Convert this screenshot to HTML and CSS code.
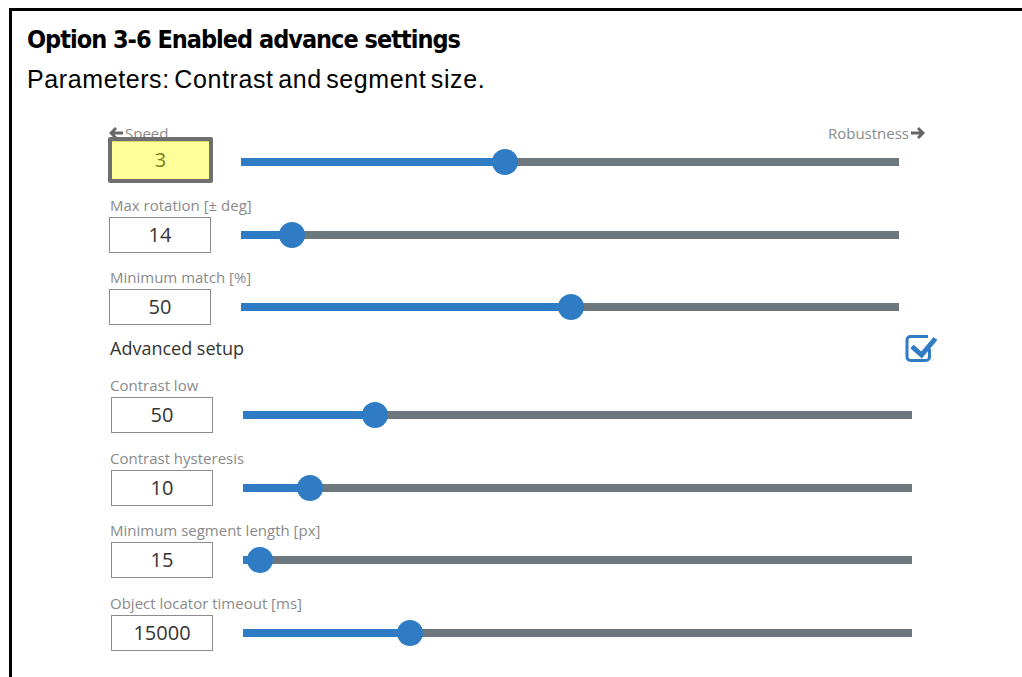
FILE: index.html
```html
<!DOCTYPE html>
<html lang="en">
<head>
  <meta charset="UTF-8">
  <title>Option 3-6 Enabled advance settings</title>
  <link rel="stylesheet" href="styles.css">
</head>
<body>
<div class="frame">
  <!-- heading -->
  <h1 class="title">Option 3-6 Enabled advance settings</h1>
  <p class="subtitle">Parameters: Contrast and segment size.</p>

  <div class="panel">
    <!-- speed / robustness -->
    <div class="speed-head">
      <span class="hint">
        <svg class="arrow" viewBox="0 0 14 12"><path d="M6 0 L0 6 L6 12 L8 10 L5.5 7.5 H14 V4.5 H5.5 L8 2 Z"/></svg>Speed
      </span>
      <span class="hint">
        Robustness<svg class="arrow" viewBox="0 0 14 12"><path d="M8 0 L14 6 L8 12 L6 10 L8.5 7.5 H0 V4.5 H8.5 L6 2 Z"/></svg>
      </span>
    </div>
    <div class="row row-speed">
      <div class="value value-active">3</div>
      <div class="slider slider-low">
        <div class="fill" style="width: 40.1%"></div>
        <div class="thumb" style="left: 40.1%"></div>
      </div>
    </div>

    <div class="field">
      <div class="label">Max rotation [± deg]</div>
      <div class="row">
        <div class="value">14</div>
        <div class="slider">
          <div class="fill" style="width: 7.7%"></div>
          <div class="thumb" style="left: 7.7%"></div>
        </div>
      </div>
    </div>

    <div class="field field-last">
      <div class="label">Minimum match [%]</div>
      <div class="row">
        <div class="value">50</div>
        <div class="slider">
          <div class="fill" style="width: 50.2%"></div>
          <div class="thumb" style="left: 50.2%"></div>
        </div>
      </div>
    </div>

    <!-- advanced -->
    <div class="adv-head">
      <span>Advanced setup</span>
      <svg class="check" viewBox="0 0 32 28">
        <path d="M23 2.5 H5.5 a3.5 3.5 0 0 0 -3.5 3.5 V23 a3.5 3.5 0 0 0 3.5 3.5 H21 a3.5 3.5 0 0 0 3.5 -3.5 V15" fill="none" stroke="#2f7cc4" stroke-width="3"/>
        <path d="M7 12.5 L16.5 21 L30.5 4.5" fill="none" stroke="#2f7cc4" stroke-width="5" stroke-linejoin="miter"/>
      </svg>
    </div>

    <div class="adv">
      <div class="field">
        <div class="label">Contrast low</div>
        <div class="row">
          <div class="value">50</div>
          <div class="slider">
            <div class="fill" style="width: 19.7%"></div>
            <div class="thumb" style="left: 19.7%"></div>
          </div>
        </div>
      </div>
      <div class="field">
        <div class="label">Contrast hysteresis</div>
        <div class="row">
          <div class="value">10</div>
          <div class="slider">
            <div class="fill" style="width: 10%"></div>
            <div class="thumb" style="left: 10%"></div>
          </div>
        </div>
      </div>
      <div class="field">
        <div class="label">Minimum segment length [px]</div>
        <div class="row">
          <div class="value">15</div>
          <div class="slider">
            <div class="fill" style="width: 2.5%"></div>
            <div class="thumb" style="left: 2.5%"></div>
          </div>
        </div>
      </div>
      <div class="field">
        <div class="label">Object locator timeout [ms]</div>
        <div class="row">
          <div class="value">15000</div>
          <div class="slider">
            <div class="fill" style="width: 25%"></div>
            <div class="thumb" style="left: 25%"></div>
          </div>
        </div>
      </div>
    </div>
  </div>
</div>
</body>
</html>
```

FILE: styles.css
```css
html, body {
  margin: 0;
  padding: 0;
  background-color: #fff;
  overflow: hidden;
}
.frame {
  width: 1100px;
  height: 700px;
  margin: 8px 0 0 9px;
  border-top: 3px solid #000;
  border-left: 3px solid #000;
  box-sizing: border-box;
}
.title {
  margin: 0;
  padding: 14px 0 0 15px;
  font-family: "DejaVu Sans Condensed", "DejaVu Sans", sans-serif;
  font-size: 25px;
  line-height: 30px;
  letter-spacing: -1px;
  font-weight: bold;
  color: #000;
}
.subtitle {
  margin: 9px 0 0 15px;
  font-family: "Liberation Sans", sans-serif;
  font-size: 25px;
  line-height: 30px;
  letter-spacing: 0.6px;
  word-spacing: -3px;
  color: #000;
}
.panel {
  margin: 30px 0 0 96px;
  font-family: "Open Sans", sans-serif;
}
.speed-head {
  width: 817px;
  display: flex;
  justify-content: space-between;
  margin-bottom: -5px;
}
.hint, .label {
  font-size: 15px;
  line-height: 18px;
  color: #8a8a8a;
}
.hint {
  display: flex;
  align-items: center;
  gap: 2px;
  padding-left: 1px;
}
.arrow {
  width: 14px;
  height: 12px;
  fill: #666;
}
.row {
  width: 791px;
  display: grid;
  grid-template-columns: 133px 1fr;
  align-items: center;
}
.row-speed {
  margin-bottom: 13px;
}
.field {
  margin-bottom: 15px;
}
.field-last {
  margin-bottom: 12px;
}
.label {
  margin-bottom: 3px;
  padding-left: 2px;
}
.adv .label {
  padding-left: 0;
}
.value {
  width: 102px;
  height: 36px;
  margin-left: 1px;
  box-sizing: border-box;
  border: 1px solid #8c8c8c;
  font-size: 20px;
  line-height: 34px;
  text-align: center;
  color: #333;
}
.value-active {
  width: 105px;
  height: 46px;
  margin-left: 0;
  border: 4px solid #6f6f6f;
  border-radius: 2px;
  background-color: #ffff99;
  box-shadow: inset 0 1px 0 #d8d870;
  line-height: 38px;
  color: #7d7a22;
}
.slider {
  position: relative;
  height: 8px;
  background-color: #6c777e;
}
.slider-low {
  margin-top: 4px;
}
.fill {
  height: 100%;
  background-color: #2f7cc4;
}
.thumb {
  position: absolute;
  top: 50%;
  width: 26px;
  height: 26px;
  margin: -13px 0 0 -13px;
  border-radius: 50%;
  background-color: #2f7cc4;
}
.adv-head {
  width: 829px;
  height: 22px;
  display: flex;
  justify-content: space-between;
  align-items: center;
  margin-bottom: 17px;
  font-size: 18px;
  color: #333;
}
.adv-head span {
  padding-left: 2px;
}
.check {
  width: 32px;
  height: 28px;
}
.adv {
  margin-left: 2px;
}
.adv .row {
  width: 802px;
}
.adv .field {
  margin-bottom: 15.5px;
}
```
